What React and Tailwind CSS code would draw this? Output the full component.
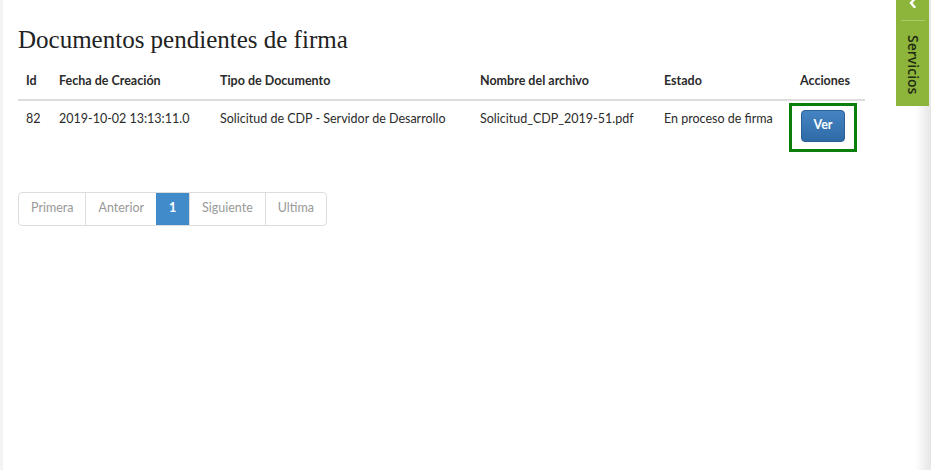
import React from 'react';

// Pending signature documents view
const rows = [
  {
    id: 82,
    fecha: '2019-10-02 13:13:11.0',
    tipo: 'Solicitud de CDP - Servidor de Desarrollo',
    archivo: 'Solicitud_CDP_2019-51.pdf',
    estado: 'En proceso de firma',
  },
];

const pages = ['Primera', 'Anterior', '1', 'Siguiente', 'Ultima'];

const App = () => {
  return (
    <div className="relative flex h-[470px] w-[931px] overflow-hidden bg-white font-['Lato',sans-serif] text-[12.5px] text-[#2b2b2b]">
      {/* left edge */}
      <div className="w-[3px] shrink-0 bg-[#f3f3f3]" />

      <div className="flex-1 pl-[15px] pr-[66px] pt-[25px]">
        <h1 className="font-['Liberation_Serif',serif] text-[25px] leading-[30px] text-[#222]">
          Documentos pendientes de firma
        </h1>

        <table className="mt-[10px] w-full table-fixed border-collapse">
          <thead>
            <tr className="border-b-2 border-[#ddd]">
              <th className="w-[33px] px-2 pt-[7px] pb-[8px] text-left font-bold">Id</th>
              <th className="w-[161px] px-2 pt-[7px] pb-[8px] text-left font-bold">Fecha de Creación</th>
              <th className="w-[260px] px-2 pt-[7px] pb-[8px] text-left font-bold">Tipo de Documento</th>
              <th className="w-[184px] px-2 pt-[7px] pb-[8px] text-left font-bold">Nombre del archivo</th>
              <th className="w-[136px] px-2 pt-[7px] pb-[8px] text-left font-bold">Estado</th>
              <th className="px-2 pt-[7px] pb-[8px] text-left font-bold">Acciones</th>
            </tr>
          </thead>
          <tbody>
            {rows.map((r) => (
              <tr key={r.id} className="align-top">
                <td className="px-2 pt-[9px]">{r.id}</td>
                <td className="px-2 pt-[9px]">{r.fecha}</td>
                <td className="px-2 pt-[9px]">{r.tipo}</td>
                <td className="px-2 pt-[9px]">{r.archivo}</td>
                <td className="px-2 pt-[9px]">{r.estado}</td>
                <td className="px-0 pt-[2px]">
                  <div className="ml-[-3px] inline-block border-[3px] border-[#0b7f0b] px-[9px] pt-[4px] pb-[7px]">
                    <button className="h-[32px] w-[44px] rounded-[4px] border border-[#2a5f95] bg-gradient-to-b from-[#4584c3] to-[#2e6aa6] font-bold text-white">
                      Ver
                    </button>
                  </div>
                </td>
              </tr>
            ))}
          </tbody>
        </table>

        <div className="mt-[40px] flex w-fit overflow-hidden rounded-[4px] border border-[#ddd] text-[#999]">
          {pages.map((p, i) => (
            <div
              key={p}
              className={
                p === '1'
                  ? 'flex h-[32px] w-[33px] items-center justify-center bg-[#428bca] font-bold text-white'
                  : i === 0
                  ? 'flex h-[32px] items-center px-[12px]'
                  : 'flex h-[32px] items-center border-l border-[#ddd] px-[12px]'
              }
            >
              {p}
            </div>
          ))}
        </div>
      </div>

      {/* right shadow edge */}
      <div className="absolute right-0 top-0 h-full w-[16px] bg-gradient-to-r from-white to-[#e6e6e6]" />

      {/* servicios tab */}
      <div className="absolute right-[2px] top-0 flex h-[106px] w-[33px] flex-col items-center bg-[#8db43b]">
        <svg width="10" height="10" viewBox="0 0 10 10" className="mt-[-2px]">
          <path d="M6.5 1 L3 5 L6.5 9" stroke="white" strokeWidth="2.5" fill="none" strokeLinecap="round" />
        </svg>
        <div className="mt-[12px] h-px w-[24px] bg-[#a9c96a]" />
        <div className="mt-[14px] font-['Open_Sans',sans-serif] text-[14px] font-semibold leading-none text-[#1f2a12] [writing-mode:vertical-rl]">
          Servicios
        </div>
      </div>
    </div>
  );
};

export default App;
